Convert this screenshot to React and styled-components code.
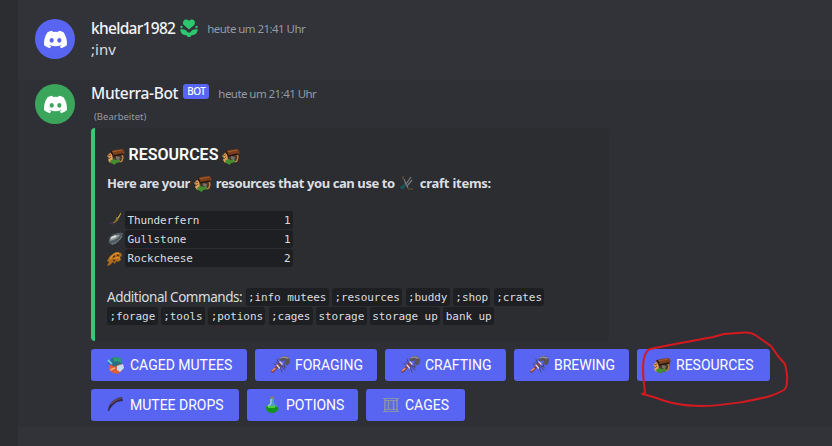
import React from 'react';
import styled, { createGlobalStyle } from 'styled-components';
import { FaDiscord } from 'react-icons/fa';

const GlobalStyle = createGlobalStyle`
  * {
    box-sizing: border-box;
  }
  body {
    margin: 0;
    background: #313338;
    overflow: hidden;
  }
`;

const Page = styled.div`
  display: flex;
  position: relative;
  width: 832px;
  height: 446px;
  overflow: hidden;
  background: #313338;
  color: #dbdee1;
  font-family: "Noto Sans", "Open Sans", sans-serif;
`;

const Sidebar = styled.div`
  flex: 0 0 18px;
  background: #2b2d31;
`;

const Chat = styled.div`
  flex: 1;
  padding-top: 15px;
`;

const Message = styled.div`
  display: flex;
  gap: 16px;
  height: ${props => props.$height}px;
  padding: 2px 0 0 17px;
  background: ${props => (props.$active ? '#2e3035' : 'transparent')};
`;

const Avatar = styled.div`
  display: flex;
  flex: 0 0 40px;
  align-items: center;
  justify-content: center;
  height: 40px;
  margin-top: 2px;
  border-radius: 50%;
  background: ${props => props.$color};
  color: white;
  font-size: 25px;
`;

const Content = styled.div`
  flex: 1;
`;

const Header = styled.div`
  display: flex;
  align-items: center;
  height: 22px;
`;

const Text = styled.span`
  white-space: pre;
  letter-spacing: ${props => props.$spacing || 0}px;
`;

const Name = styled(Text)`
  color: #f2f3f5;
  font-size: 15.5px;
  font-weight: 500;
`;

const Time = styled(Text)`
  margin-left: 9px;
  color: #949ba4;
  font-size: 11.5px;
`;

const BotTag = styled.span`
  height: 15px;
  margin: 0 0 3px 5px;
  padding: 0 4px;
  border-radius: 3px;
  background: #5865f2;
  color: white;
  font-size: 10px;
  font-weight: 500;
  line-height: 15px;
  letter-spacing: -0.5px;
`;

const Body = styled.div`
  height: 22px;
  font-size: 15px;
  line-height: 20px;
`;

const Edited = styled.div`
  height: 24px;
  padding-left: 3px;
  color: #949ba4;
  font-size: 9.5px;
  line-height: 25px;
`;

const Embed = styled.div`
  width: 518px;
  height: 213px;
  padding: 16px 12px;
  border-left: 4px solid #3ac878;
  border-radius: 4px;
  background: #2b2d31;
`;

const Title = styled.div`
  display: flex;
  align-items: center;
  gap: 3.5px;
  height: 22px;
  color: white;
  font-family: Roboto, sans-serif;
  font-size: 16px;
  font-weight: 600;
  line-height: 22px;

  span {
    align-self: flex-start;
  }

  svg {
    margin-top: 2px;
  }
`;

const Description = styled.div`
  display: flex;
  align-items: center;
  gap: 4px;
  height: 20px;
  margin-top: 7px;
  font-size: 13px;
  font-weight: 700;
`;

const Items = styled.div`
  display: grid;
  gap: 1px;
  margin: 18px 0 21px;
`;

const Item = styled.div`
  display: flex;
  gap: 1px;
  align-items: center;
`;

const Code = styled.code`
  display: flex;
  justify-content: space-between;
  width: ${props => (props.$width ? `${props.$width}px` : 'auto')};
  height: 18px;
  padding: 0 2.4px;
  border-radius: 3px;
  background: #1e1f22;
  font-family: "DejaVu Sans Mono", monospace;
  font-size: 11px;
  line-height: 20px;
  letter-spacing: -0.08px;
  white-space: pre;
`;

const Commands = styled.div`
  display: flex;
  gap: 3.3px;
  height: 19px;
  font-size: 13.5px;
  line-height: 18px;
`;

const Buttons = styled.div`
  display: flex;
  gap: 8px;
  margin-top: 8px;
`;

const Button = styled.button`
  display: flex;
  align-items: center;
  gap: 5px;
  width: ${props => props.$width}px;
  height: 32px;
  padding: 0 0 0 16px;
  border: none;
  border-radius: 3px;
  background: #5865f2;
  color: white;
  font-family: Roboto, sans-serif;
  font-size: 14px;
`;

const Icon = styled.svg`
  display: block;
  flex: none;
  overflow: visible;
`;

const Badge = styled(Icon)`
  margin-left: 5px;
`;

const Scribble = styled.svg`
  position: absolute;
  top: 326px;
  left: 636px;
`;

const Tulip = () => (
  <Badge width="18" height="18" viewBox="0 0 18 18" fill="#2dc770">
    <path d="M9 10.5 3.8 6C2 4 3.4.5 6 .5c1.300 0 2.300.5 3 1.500.7-1 1.700-1.500 3-1.500 2.600 0 4 3.500 2.200 5.500z" />
    <path d="M.2 10.5c3.500-.7 6 .4 7.600 3h2.400c1.600-2.600 4.100-3.700 7.600-3-.3 3.700-2.800 6-6.300 5.700L10.300 18H7.700l-1.200-1.800C3 16.500.5 14.200.2 10.500z" />
    <path d="m1.500 6.500 1.500 1.500-1.500 1.500L0 8zM16.500 6.500 18 8l-1.500 1.500L15 8z" />
  </Badge>
);

const Basket = () => (
  <Icon width="18" height="17" viewBox="0 0 18 17">
    <path d="m5 7 12-2-1 8-6 2-4-2z" fill="#4a382b" />
    <path d="m0 8 3-3 2 1 1 6-3 3-2-3 1-2z" fill="#dda055" />
    <path d="m3 4 4-2 9-1 2 4-3 1-9 2z" fill="#7b3f1e" />
    <path d="m5 4 10-2" stroke="#a65b2b" />
    <path d="m6 8 10-2M4 3l2 4" stroke="#28170f" strokeWidth="1.5" />
    <path d="m3 13 3-2 3 1 3-1 2 3-5 1-1 2-4-2z" fill="#438d30" />
    <path d="m9 8 4 1-1 3-3-1z" fill="#77716b" />
    <path d="m15 7 1 2-1 4-2 1" stroke="#c78040" strokeWidth="1.3" fill="none" />
    <path d="m1 8 3-1M2 11l2-2" stroke="#8c512a" />
  </Icon>
);

const Hammer = () => (
  <Icon width="19" height="18" viewBox="0 0 19 18" fill="none" strokeLinecap="round">
    <path d="m5 6 9 8M6 3l5 13M3 8l11 3M13 8l1 4" stroke="#4b4262" strokeWidth="0.9" />
    <path d="M1.5 15.500 9 8" stroke="#823f49" strokeWidth="2.6" />
    <path d="m1.500 14.500 2.500-2" stroke="#ef9366" strokeWidth="1.5" />
    <path d="m6 9 2.500 3M9 6l2 2" stroke="#ddd2df" strokeWidth="1.4" />
    <path d="m8 3 4-3 5 .5 2 3-.5 4-2.500 2-3-2 1-3-4 1z" fill="#56535a" />
    <path d="m10 2 3-1 4 1" stroke="#97939a" strokeWidth="1.3" />
  </Icon>
);

const Tools = () => (
  <Icon width="17" height="17" viewBox="0 0 17 17" fill="none">
    <path d="m5 4 2 5 5-7M8 11l5-6M6 8l3 5" stroke="#77787c" strokeWidth="1.2" />
    <path d="M4 1v3M9 14h5" stroke="#705337" />
    <path d="m1 13 4-3v3H2" stroke="#17595b" strokeWidth="1.3" />
  </Icon>
);

const Fern = () => (
  <Icon width="17" height="17" viewBox="0 0 17 17" fill="none">
    <path d="M6 11c4-1 5-4 7-8M8 9l3-1M9 9l1-4" stroke="#8e782d" strokeWidth="1.3" />
    <path d="m3 11 4 1" stroke="#4b315e" strokeWidth="1.3" />
    <path d="M11 6 14 1" stroke="#d2a52e" />
  </Icon>
);

const Stone = () => (
  <Icon width="17" height="17" viewBox="0 0 17 17">
    <path d="M2 8c1-5 9-7 14-6-1 6-6 10-11 12-3-1-4-3-3-6" fill="#535b60" />
    <path d="M3 8c2-4 7-5 10-4-2 3-5 5-10 6z" fill="#92999b" />
    <path d="m4 7 5-2" stroke="#e4e9e9" strokeWidth="1.5" />
    <path d="M5 13c4 0 8-4 10-8" stroke="#70888f" fill="none" />
  </Icon>
);

const Cheese = () => (
  <Icon width="17" height="17" viewBox="0 0 17 17">
    <path d="m0 11 3-5 6-4 5 1 1 3-2 1 1 3-3 2-2-1-1 3-2-2-3 3-3 1 2-4z" fill="#b26a1d" />
    <path d="m3 9 4-5 5-1M7 9l4-2 2 2" fill="none" stroke="#e1922b" strokeWidth="1.3" />
    <path d="m6 7 2-1m2-1 2 1m-6 5 2-1" stroke="#59351a" strokeWidth="1.5" />
  </Icon>
);

const Creature = () => (
  <Icon width="18" height="18" viewBox="0 0 18 18">
    <path d="M1 6c3-2 4-5 7-5l6 1 1 6-5 4-7-2z" fill="#286f83" />
    <path d="m6 1 8 1 1 5-5-2-3 1z" fill="#2d9b74" />
    <path d="m1 4 4 4" stroke="#75c2e6" strokeWidth="1.8" />
    <path d="M2 9c3-1 4 3 7 1l4-2 4 2-2 5-5 3-6-2-2-3z" fill="#df5d35" />
    <path d="m10 10 6-2 1 4-4 4-3-2z" fill="#c8dcef" />
    <path d="m3 14 5-2" stroke="#f3ad79" strokeWidth="1.5" />
  </Icon>
);

const Horn = () => (
  <Icon width="18" height="18" viewBox="0 0 18 18">
    <path d="M1 15C1 8 7 2 15 1l1 4C9 5 5 9 2 15z" fill="#32294b" />
    <path d="M4 8c3-4 7-5 11-6" fill="none" stroke="#604860" strokeWidth="1.3" />
  </Icon>
);

const Potion = () => (
  <Icon width="18" height="18" viewBox="0 0 18 18">
    <path d="M7 2h4v5l4 4c2 7-14 7-12 0l4-4z" fill="#529eb7" />
    <path d="M3 10c3 2 8-1 12 1 2 8-14 8-12-1z" fill="#13911f" />
    <path d="M5 11h7" stroke="#62df3e" strokeWidth="1.5" />
    <path d="M7 1.5h4" stroke="#9b7659" strokeWidth="1.5" />
    <path d="M8 3v5l-3 2" fill="none" stroke="#b5e0f1" />
  </Icon>
);

const Cage = () => (
  <Icon width="18" height="18" viewBox="0 0 18 18" fill="none" stroke="#8b93a8">
    <path d="M1 2.500h16M2 4.500h14M2 13.500h14M1 15.500h16" strokeWidth="1.2" />
    <path d="M3 3v12M6.500 5v8M11.500 5v8M15 3v12" strokeWidth="1.5" />
    <path d="M9 5v8" stroke="#6974ab" />
  </Icon>
);

const items = [
  { name: 'Thunderfern', count: 1, icon: Fern },
  { name: 'Gullstone', count: 1, icon: Stone },
  { name: 'Rockcheese', count: 2, icon: Cheese },
];

const commands = [
  [';info mutees', ';resources', ';buddy', ';shop', ';crates'],
  [';forage', ';tools', ';potions', ';cages', 'storage', 'storage up', 'bank up'],
];

const buttons = [
  [
    { label: 'CAGED MUTEES', width: 156, icon: Creature },
    { label: 'FORAGING', width: 122, icon: Hammer },
    { label: 'CRAFTING', width: 121, icon: Hammer },
    { label: 'BREWING', width: 115, icon: Hammer },
    { label: 'RESOURCES', width: 133, icon: Basket },
  ],
  [
    { label: 'MUTEE DROPS', width: 148, icon: Horn },
    { label: 'POTIONS', width: 111, icon: Potion },
    { label: 'CAGES', width: 99, icon: Cage },
  ],
];

const App = () => {
  return (
    <Page>
      <GlobalStyle />
      <Sidebar />
      <Chat>
        <Message $height={65}>
          <Avatar $color="#5865f2"><FaDiscord /></Avatar>
          <Content>
            <Header>
              <Name $spacing={-0.7}>kheldar1982</Name>
              <Tulip />
              <Time $spacing={-0.55}>heute um 21:41 Uhr</Time>
            </Header>
            <Body>;inv</Body>
          </Content>
        </Message>
        <Message $active $height={347}>
          <Avatar $color="#3ba55c"><FaDiscord /></Avatar>
          <Content>
            <Header>
              <Name $spacing={-0.35}>Muterra-Bot</Name>
              <BotTag>BOT</BotTag>
              <Time $spacing={-0.55}>heute um 21:41 Uhr</Time>
            </Header>
            <Edited>(Bearbeitet)</Edited>
            <Embed>
              <Title><Basket /><Text>RESOURCES</Text><Basket /></Title>
              <Description>
                <Text $spacing={-0.45}>Here are your</Text>
                <Basket />
                <Text $spacing={-0.41}>resources that you can use to</Text>
                <Tools />
                <Text $spacing={-0.25}>craft items:</Text>
              </Description>
              <Items>
                {items.map(item => (
                  <Item key={item.name}>
                    <item.icon />
                    <Code $width={168}>
                      <span>{item.name}</span>
                      <span>{item.count}</span>
                    </Code>
                  </Item>
                ))}
              </Items>
              {commands.map((row, i) => (
                <Commands key={i}>
                  {i === 0 && <Text $spacing={-0.46}>Additional Commands:</Text>}
                  {row.map(command => <Code key={command}>{command}</Code>)}
                </Commands>
              ))}
            </Embed>
            {buttons.map((row, i) => (
              <Buttons key={i}>
                {row.map(button => (
                  <Button key={button.label} $width={button.width}>
                    <button.icon />
                    <Text>{button.label}</Text>
                  </Button>
                ))}
              </Buttons>
            ))}
          </Content>
        </Message>
      </Chat>
      <Scribble width="160" height="90" viewBox="636 326 160 90" fill="none" stroke="#d51920" strokeWidth="2" strokeLinecap="round" strokeLinejoin="round">
        <path d="M642 394 645 393C644 382 642 373 643.500 361Q645 351 650 349L670 345 713 337 724 334 745 332.500Q751 332 756 335.500L771 346 778 356 785 364C786 369 788 377 787 380Q787 388 784 390C779 393 773 395 767 397L743 402C729 404 716 406 702 406Q687 406 675 403.500C663 401 653 396 642 394" />
      </Scribble>
    </Page>
  );
};

export default App;
